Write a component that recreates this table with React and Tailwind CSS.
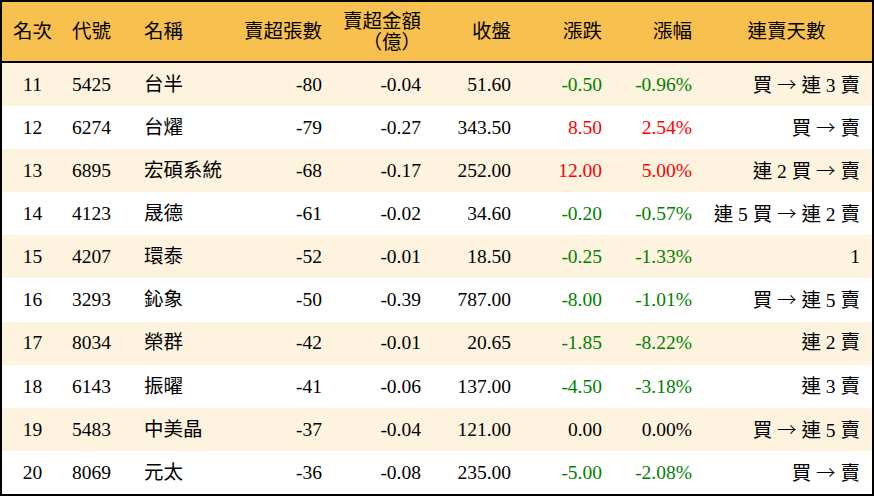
const rows = [
  { rank: 11, code: "5425", name: "台半", lots: "-80", amt: "-0.04", close: "51.60", chg: "-0.50", pct: "-0.96%", dir: "down", streak: "買 → 連 3 賣" },
  { rank: 12, code: "6274", name: "台燿", lots: "-79", amt: "-0.27", close: "343.50", chg: "8.50", pct: "2.54%", dir: "up", streak: "買 → 賣" },
  { rank: 13, code: "6895", name: "宏碩系統", lots: "-68", amt: "-0.17", close: "252.00", chg: "12.00", pct: "5.00%", dir: "up", streak: "連 2 買 → 賣" },
  { rank: 14, code: "4123", name: "晟德", lots: "-61", amt: "-0.02", close: "34.60", chg: "-0.20", pct: "-0.57%", dir: "down", streak: "連 5 買 → 連 2 賣" },
  { rank: 15, code: "4207", name: "環泰", lots: "-52", amt: "-0.01", close: "18.50", chg: "-0.25", pct: "-1.33%", dir: "down", streak: "1" },
  { rank: 16, code: "3293", name: "鈊象", lots: "-50", amt: "-0.39", close: "787.00", chg: "-8.00", pct: "-1.01%", dir: "down", streak: "買 → 連 5 賣" },
  { rank: 17, code: "8034", name: "榮群", lots: "-42", amt: "-0.01", close: "20.65", chg: "-1.85", pct: "-8.22%", dir: "down", streak: "連 2 賣" },
  { rank: 18, code: "6143", name: "振曜", lots: "-41", amt: "-0.06", close: "137.00", chg: "-4.50", pct: "-3.18%", dir: "down", streak: "連 3 賣" },
  { rank: 19, code: "5483", name: "中美晶", lots: "-37", amt: "-0.04", close: "121.00", chg: "0.00", pct: "0.00%", dir: "flat", streak: "買 → 連 5 賣" },
  { rank: 20, code: "8069", name: "元太", lots: "-36", amt: "-0.08", close: "235.00", chg: "-5.00", pct: "-2.08%", dir: "down", streak: "買 → 賣" },
];

const cols = "grid grid-cols-[61px_72px_100px_96px_99px_90px_91px_90px_171px] items-center";

const tone = {
  up: "text-[#ff0000]",
  down: "text-[#008000]",
  flat: "text-black",
};

function Streak({ text }) {
  const parts = text.split("→");
  return (
    <>
      {parts.map((p, i) => (
        <span key={i}>
          {i > 0 && <span className="font-['Noto_Sans_CJK_TC',sans-serif] font-light">→</span>}
          {p}
        </span>
      ))}
    </>
  );
}

export default function App() {
  return (
    <div className="w-[874px] h-[496px] bg-white border-2 border-black flex flex-col text-black text-[19.5px] font-['Liberation_Serif','Noto_Sans_CJK_TC',serif]">
      <div className={`${cols} h-[61px] shrink-0 bg-[#f7c04f] border-b-2 border-black leading-[21px]`}>
        <div className="text-center">名次</div>
        <div className="pl-[9px]">代號</div>
        <div className="pl-[9px]">名稱</div>
        <div className="text-right pr-[9px]">賣超張數</div>
        <div className="text-right pr-[9px] mt-[1px]">
          <div>賣超金額</div>
          <div>（億）</div>
        </div>
        <div className="text-right pr-[9px]">收盤</div>
        <div className="text-right pr-[9px]">漲跌</div>
        <div className="text-right pr-[9px]">漲幅</div>
        <div className="text-center">連賣天數</div>
      </div>
      {rows.map((r, i) => (
        <div key={r.rank} className={`${cols} flex-1 ${i % 2 === 0 ? "bg-[#fdf3df]" : "bg-white"}`}>
          <div className="text-center">{r.rank}</div>
          <div className="pl-[9px]">{r.code}</div>
          <div className="pl-[9px]">{r.name}</div>
          <div className="text-right pr-[9px]">{r.lots}</div>
          <div className="text-right pr-[9px]">{r.amt}</div>
          <div className="text-right pr-[9px]">{r.close}</div>
          <div className={`text-right pr-[9px] ${tone[r.dir]}`}>{r.chg}</div>
          <div className={`text-right pr-[9px] ${tone[r.dir]}`}>{r.pct}</div>
          <div className="text-right pr-[12px] whitespace-nowrap">
            <Streak text={r.streak} />
          </div>
        </div>
      ))}
    </div>
  );
}
